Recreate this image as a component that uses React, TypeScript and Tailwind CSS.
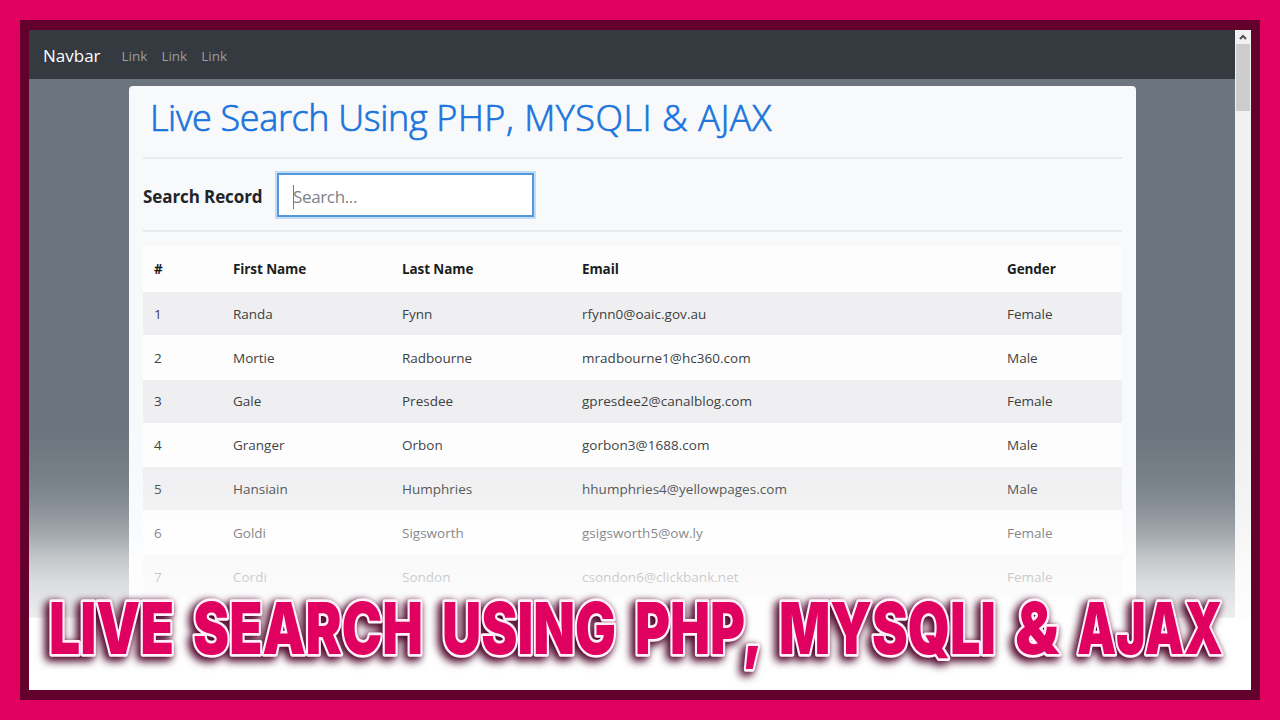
type Row = {
  id: number;
  first: string;
  last: string;
  email: string;
  gender: string;
};

const rows: Row[] = [
  { id: 1, first: 'Randa', last: 'Fynn', email: 'rfynn0@oaic.gov.au', gender: 'Female' },
  { id: 2, first: 'Mortie', last: 'Radbourne', email: 'mradbourne1@hc360.com', gender: 'Male' },
  { id: 3, first: 'Gale', last: 'Presdee', email: 'gpresdee2@canalblog.com', gender: 'Female' },
  { id: 4, first: 'Granger', last: 'Orbon', email: 'gorbon3@1688.com', gender: 'Male' },
  { id: 5, first: 'Hansiain', last: 'Humphries', email: 'hhumphries4@yellowpages.com', gender: 'Male' },
  { id: 6, first: 'Goldi', last: 'Sigsworth', email: 'gsigsworth5@ow.ly', gender: 'Female' },
  { id: 7, first: 'Cordi', last: 'Sondon', email: 'csondon6@clickbank.net', gender: 'Female' },
];

// horizontal squeeze of the banner lettering
const squeeze = 0.78;

const words = [
  { text: 'LIVE', x: 49, width: 125 },
  { text: 'SEARCH', x: 193, width: 230 },
  { text: 'USING', x: 442, width: 174 },
  { text: 'PHP,', x: 635, width: 128 },
  { text: 'MYSQLI', x: 779, width: 217 },
  { text: '&', x: 1015, width: 44 },
  { text: 'AJAX', x: 1077, width: 146 },
];

function Navbar() {
  return (
    <nav className="flex h-[49px] shrink-0 items-center bg-[#343a40] pl-[14px] pt-[3px]">
      <a className="text-[17px] text-white">Navbar</a>
      <div className="ml-[21px] flex gap-[14px] text-[13.5px] text-[#999c9f]">
        <a>Link</a>
        <a>Link</a>
        <a>Link</a>
      </div>
    </nav>
  );
}

function Scrollbar() {
  return (
    <div className="flex w-4 shrink-0 flex-col items-center bg-[#f1f1f1]">
      <div className="flex h-[14px] items-center">
        <svg width="8" height="6" viewBox="0 0 8 6" fill="none" stroke="#505050" strokeWidth="2">
          <path d="M1 5 4 2l3 3"/>
        </svg>
      </div>
      <div className="h-[67px] w-[14px] bg-[#cdcdcd]"/>
    </div>
  );
}

function Table() {
  return (
    <table className="mt-[14px] w-full table-fixed border-collapse bg-[#fdfdfe] text-left text-[13.5px] text-[#3c3f42]">
      <colgroup>
        <col className="w-[79px]"/>
        <col className="w-[169px]"/>
        <col className="w-[180px]"/>
        <col className="w-[425px]"/>
        <col/>
      </colgroup>
      <thead>
        <tr className="h-[46px] tracking-[-0.1px] text-[#1b1e21]">
          <th className="pl-[11px]">#</th>
          <th className="pl-[11px]">First Name</th>
          <th className="pl-[11px]">Last Name</th>
          <th className="pl-[11px]">Email</th>
          <th className="pl-[11px]">Gender</th>
        </tr>
      </thead>
      <tbody>
        {rows.map((row) => (
          <tr key={row.id} className="h-[43.85px] odd:bg-[#efeff1] odd:shadow-[inset_0_-1px_#fdfdfe]">
            <td className="pl-[11px]">{row.id}</td>
            <td className="pl-[11px]">{row.first}</td>
            <td className="pl-[11px]">{row.last}</td>
            <td className="pl-[11px] tracking-[0.03px]">{row.email}</td>
            <td className="pl-[11px]">{row.gender}</td>
          </tr>
        ))}
      </tbody>
    </table>
  );
}

function Banner() {
  return (
    <svg
      className="absolute left-0 top-[580px] overflow-visible"
      width="1280"
      height="110"
      viewBox="0 580 1280 110"
    >
      <g className="[filter:drop-shadow(-3px_3px_4px_#4a0025)_drop-shadow(-1px_1px_2px_#4a002580)]">
        <g
          className="font-['Inter',sans-serif]"
          transform={`scale(${squeeze} 1)`}
          fill="#e0005f"
          stroke="#fff0fa"
          strokeWidth="5"
          strokeLinejoin="round"
          paintOrder="stroke"
          fontSize="71"
          fontWeight="900"
        >
          {words.map((word) => (
            <text
              key={word.text}
              x={word.x / squeeze}
              y="654"
              textLength={word.width / squeeze}
              lengthAdjust="spacingAndGlyphs"
              vectorEffect="non-scaling-stroke"
            >
              {word.text}
            </text>
          ))}
        </g>
      </g>
    </svg>
  );
}

export default function App() {
  return (
    <div className="relative h-[720px] w-[1280px] overflow-hidden bg-[#e0005f] p-5 font-['Open_Sans','Noto_Sans',sans-serif]">
      <div className="h-[680px] bg-[#63002b] pb-[10px] pl-[9px] pr-[9px] pt-[10px]">
        <div className="relative flex h-[660px] overflow-hidden bg-white">
          <div className="flex h-[588px] w-[1206px] flex-col overflow-hidden bg-[#6c757d]">
            <Navbar/>
            <div className="mx-[100px] mt-[7px] w-[1007px] shrink-0 rounded-t bg-[#f8f9fb] px-[14px] pb-10">
              <h1 className="flex h-[73px] items-center whitespace-pre border-b-2 border-[#e9eaec] pb-[7px] pl-[7px] text-[36px] font-light tracking-[0.55px] text-[#1b75dc] [-webkit-text-stroke:0.7px_#1b75dc]">
                <span className="tracking-[-0.35px]">Live Search Using </span>
                PHP, MYSQLI &amp; AJAX
              </h1>
              <div className="flex h-[73px] items-center border-b-2 border-[#e9eaec]">
                <label className="w-[134px] pt-1 text-[17px] font-bold tracking-[-0.1px] text-[#212529]">
                  Search Record
                </label>
                <div className="flex h-[44px] w-[257px] items-center border-2 border-[#5598da] bg-white pl-[14px] pt-1 text-[17px] tracking-[-0.35px] text-[#7b8288] shadow-[0_0_0_2px_#bfdcf8]">
                  <span className="-mr-px h-6 w-px bg-[#777]"/>
                  Search...
                </div>
              </div>
              <Table/>
            </div>
          </div>
          <Scrollbar/>
          <div className="absolute inset-x-0 bottom-0 top-[400px] bg-[linear-gradient(to_bottom,#fff0_0,#ffffff14_45px,#ffffff29_70px,#ffffff5c_103px,#ffffff96_127px,#ffffffbd_150px,#ffffffe0_187px,#fff_189px)]"/>
        </div>
      </div>
      <Banner/>
    </div>
  );
}
